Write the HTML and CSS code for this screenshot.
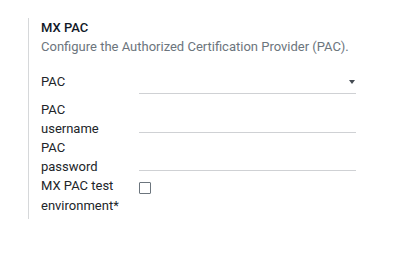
FILE: index.html
```html
<!DOCTYPE html>
<html>
<head>
<meta charset="utf-8">
<link rel="stylesheet" href="styles.css">
</head>
<body>
<div class="page">
  <div class="setting-box">
    <div class="title">MX PAC</div>
    <div class="desc">Configure the Authorized Certification Provider (PAC).</div>
    <div class="rows">
      <div class="row row-first">
        <div class="label">PAC</div>
        <div class="field field-select field-first"><span class="caret"></span></div>
      </div>
      <div class="row">
        <div class="label">PAC username</div>
        <div class="field"></div>
      </div>
      <div class="row">
        <div class="label">PAC password</div>
        <div class="field"></div>
      </div>
      <div class="row row-last">
        <div class="label">MX PAC test environment*</div>
        <div class="check-wrap"><span class="checkbox"></span></div>
      </div>
    </div>
  </div>
</div>
</body>
</html>
```
FILE: styles.css
```css
html, body {
  margin: 0;
  padding: 0;
  background: #ffffff;
}
body {
  font-family: Roboto, "Liberation Sans", sans-serif;
  font-size: 13px;
  line-height: 19px;
  color: #212529;
}
.page {
  padding: 18px 0 0 28px;
}
.setting-box {
  width: 335px;
  border-left: 1px solid #d6d8da;
  padding: 0 0 3px 12px;
}
.title {
  font-weight: 500;
  color: #111827;
}
.desc {
  color: #6c757d;
  white-space: nowrap;
}
.rows {
  margin-top: 16px;
  display: flex;
  flex-direction: column;
}
.row {
  display: flex;
  min-height: 38px;
}
.row-first {
  min-height: 28px;
}
.row-last .label {
  line-height: 20px;
}
.label {
  width: 80px;
  padding-right: 18px;
  flex: none;
}
.field {
  width: 217px;
  height: 21px;
  border-bottom: 1px solid #cfd1d4;
  align-self: flex-end;
  margin-bottom: 5px;
}
.field-first {
  margin-bottom: 6px;
}
.field-select {
  display: flex;
  align-items: center;
  justify-content: flex-end;
}
.caret {
  width: 0;
  height: 0;
  margin-right: 1px;
  margin-top: -1px;
  border-left: 3.5px solid transparent;
  border-right: 3.5px solid transparent;
  border-top: 4px solid #444a52;
}
.check-wrap {
  padding-top: 6px;
}
.checkbox {
  display: block;
  width: 10px;
  height: 10px;
  border: 1px solid #6c757d;
  border-radius: 1px;
  background: #fff;
}
```
